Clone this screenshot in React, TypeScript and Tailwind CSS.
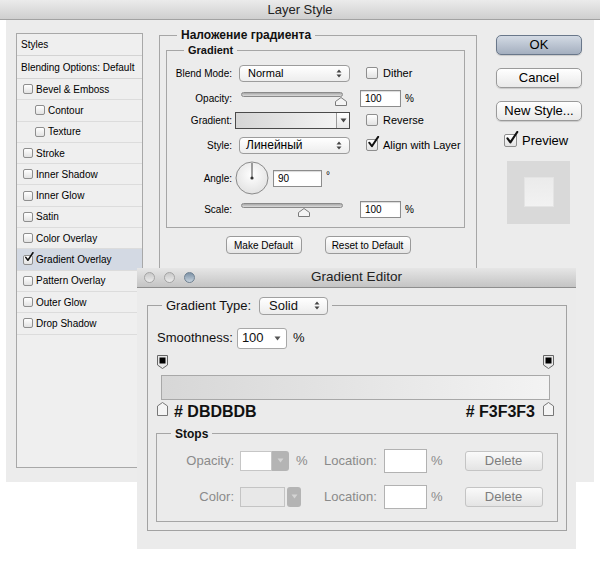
import React from 'react';

function Box({ checked = false, size = 'md' }: { checked?: boolean; size?: 'sm' | 'md' | 'lg' }) {
  const dim = size === 'sm' ? 'h-[10px] w-[10px]' : size === 'lg' ? 'h-[13px] w-[13px]' : 'h-[12px] w-[12px]';
  return (
    <span className={`relative inline-block shrink-0 rounded-[2px] border border-[#8e8e8e] bg-gradient-to-b from-white to-[#e2e2e2] ${dim}`}>
      {checked && (
        <svg viewBox="0 0 14 14" className="absolute -top-[4px] left-[0px] h-[125%] w-[125%]">
          <path d="M2.5 7.5 L5.5 11.5 L12.5 1" fill="none" stroke="#111" strokeWidth="2.2" strokeLinecap="round" strokeLinejoin="round" />
        </svg>
      )}
    </span>
  );
}

function UpDown() {
  return (
    <svg width="6" height="9" viewBox="0 0 6 9">
      <path d="M3 0.5 L5.5 3.5 H0.5Z M3 8.5 L5.5 5.5 H0.5Z" fill="#444" />
    </svg>
  );
}

function Down({ color = '#444' }: { color?: string }) {
  return (
    <svg width="7" height="5" viewBox="0 0 7 5">
      <path d="M0.5 0.5 H6.5 L3.5 4.5Z" fill={color} />
    </svg>
  );
}

function Thumb() {
  return (
    <svg width="12" height="9" viewBox="0 0 12 9">
      <path d="M0.5 8.5 V4.5 L6 0.5 L11.5 4.5 V8.5Z" fill="#f4f4f4" stroke="#7a7a7a" />
    </svg>
  );
}

function Slider({ pos }: { pos: number }) {
  return (
    <div className="relative h-[16px] w-[111px]">
      <div className="ml-[2px] mt-[3px] h-[5px] w-[102px] rounded-full border border-[#8a8a8a] bg-gradient-to-b from-[#a8a8a8] to-[#dcdcdc]" />
      <div className="absolute top-[5px]" style={{ left: pos }}>
        <Thumb />
      </div>
    </div>
  );
}

function Input({ value, w = 'w-[41px]' }: { value: string; w?: string }) {
  return (
    <div className={`flex h-[17px] items-center border border-[#8c8c8c] bg-white pl-[4px] text-[10px] shadow-[inset_0_1px_1px_rgba(0,0,0,0.15)] ${w}`}>
      {value}
    </div>
  );
}

const styleRows = [
  { label: 'Bevel & Emboss', indent: false },
  { label: 'Contour', indent: true },
  { label: 'Texture', indent: true },
  { label: 'Stroke', indent: false },
  { label: 'Inner Shadow', indent: false },
  { label: 'Inner Glow', indent: false },
  { label: 'Satin', indent: false },
  { label: 'Color Overlay', indent: false },
  { label: 'Gradient Overlay', indent: false, checked: true },
  { label: 'Pattern Overlay', indent: false },
  { label: 'Outer Glow', indent: false },
  { label: 'Drop Shadow', indent: false },
];

function MacButton({ label, primary = false }: { label: string; primary?: boolean }) {
  return (
    <div
      className={`flex h-[20px] w-[86px] items-center justify-center rounded-[5px] border text-[13px] text-black shadow-[0_1px_1px_rgba(0,0,0,0.15)] ${
        primary ? 'border-[#69778a] bg-gradient-to-b from-[#d3dae4] to-[#a4afbf]' : 'border-[#9a9a9a] bg-gradient-to-b from-white to-[#e9e9e9]'
      }`}
    >
      {label}
    </div>
  );
}

function LayerStyle() {
  return (
    <div className="absolute left-0 top-0 w-[600px]">
      <div className="flex h-[20px] items-center justify-center border-b border-[#a2a2a2] bg-gradient-to-b from-[#ebebeb] to-[#cfcfcf] text-[13px] text-[#222]">
        Layer Style
      </div>
      <div className="ml-[6px] flex h-[462px] w-[588px] items-start bg-[#ececec] pl-[10px] pt-[8px]">
        <div className="mt-[5px] h-[435px] w-[127px] border border-[#a8a8a8] bg-[#efefef] text-[10px] text-black">
          <div className="flex h-[22px] items-center border-b border-[#d3d3d3] pl-[4px]">Styles</div>
          <div className="flex h-[23px] items-center border-b border-[#d3d3d3] pl-[4px]">Blending Options: Default</div>
          {styleRows.map((r) => (
            <div
              key={r.label}
              className={`flex h-[21.3px] items-center gap-[3px] border-b border-[#dcdcdc] ${r.indent ? 'pl-[18px]' : 'pl-[6px]'} ${
                r.checked ? 'bg-[#d3d9e3]' : ''
              }`}
            >
              <Box size="sm" checked={r.checked} />
              <span>{r.label}</span>
            </div>
          ))}
        </div>

        <div className="ml-[16px] w-[318px]">
          <fieldset className="h-[290px] border border-[#a6a6a6] px-[6px] pt-[2px]">
            <legend className="ml-[11px] px-[4px] text-[12px] font-bold leading-[14px] text-[#111]">Наложение градиента</legend>
            <fieldset className="w-[299px] border border-[#a6a6a6] pb-[10px] text-[10px] text-black">
              <legend className="ml-[17px] px-[4px] text-[11px] font-bold leading-[13px] text-[#111]">Gradient</legend>
              <div className="mt-[8px] flex h-[16px] items-center">
                <span className="w-[65px] text-right">Blend Mode:</span>
                <div className="ml-[7px] flex h-[17px] w-[111px] items-center justify-between rounded-[4px] border border-[#9c9c9c] bg-gradient-to-b from-white to-[#ededed] pl-[8px] pr-[7px] text-[11px]">
                  Normal
                  <UpDown />
                </div>
                <span className="ml-[16px] flex items-center gap-[5px]">
                  <Box />
                  <span className="text-[11px]">Dither</span>
                </span>
              </div>
              <div className="mt-[9px] flex h-[16px] items-center">
                <span className="w-[65px] text-right">Opacity:</span>
                <div className="ml-[7px]">
                  <Slider pos={96} />
                </div>
                <div className="ml-[10px]">
                  <Input value="100" />
                </div>
                <span className="ml-[4px]">%</span>
              </div>
              <div className="mt-[6px] flex h-[16px] items-center">
                <span className="w-[65px] text-right">Gradient:</span>
                <div className="ml-[3px] flex h-[17px] w-[115px] border border-[#4a4a4a]">
                  <div className="h-full w-[100px] bg-gradient-to-r from-[#d6d6d6] to-[#f3f3f3]" />
                  <div className="flex flex-1 items-center justify-center border-l border-[#9a9a9a] bg-gradient-to-b from-white to-[#e6e6e6]">
                    <Down />
                  </div>
                </div>
                <span className="ml-[16px] flex items-center gap-[5px]">
                  <Box />
                  <span className="text-[11px]">Reverse</span>
                </span>
              </div>
              <div className="mt-[9px] flex h-[16px] items-center">
                <span className="w-[65px] text-right">Style:</span>
                <div className="ml-[7px] flex h-[17px] w-[111px] items-center justify-between rounded-[4px] border border-[#9c9c9c] bg-gradient-to-b from-white to-[#ededed] pl-[6px] pr-[7px] text-[12px]">
                  Линейный
                  <UpDown />
                </div>
                <span className="ml-[16px] flex items-center gap-[5px]">
                  <Box checked />
                  <span className="text-[11px]">Align with Layer</span>
                </span>
              </div>
              <div className="mt-[8px] flex h-[34px] items-center">
                <span className="w-[65px] text-right">Angle:</span>
                <svg width="34" height="34" viewBox="0 0 34 34" className="ml-[3px]">
                  <defs>
                    <radialGradient id="dial" cx="50%" cy="40%" r="60%">
                      <stop offset="0%" stopColor="#ffffff" />
                      <stop offset="100%" stopColor="#e2e2e2" />
                    </radialGradient>
                  </defs>
                  <circle cx="17" cy="17" r="16" fill="url(#dial)" stroke="#8a8a8a" />
                  <line x1="17" y1="17" x2="17" y2="2" stroke="#444" strokeWidth="1" />
                  <circle cx="17" cy="17" r="1.6" fill="#333" />
                </svg>
                <div className="ml-[4px]">
                  <Input value="90" w="w-[49px]" />
                </div>
                <span className="ml-[4px] -mt-[6px]">°</span>
              </div>
              <div className="mt-[6px] flex h-[16px] items-center">
                <span className="w-[65px] text-right">Scale:</span>
                <div className="ml-[7px]">
                  <Slider pos={59} />
                </div>
                <div className="ml-[10px]">
                  <Input value="100" />
                </div>
                <span className="ml-[4px]">%</span>
              </div>
            </fieldset>
            <div className="mt-[8px] flex justify-center gap-[23px] text-[10px] text-black">
              <div className="flex h-[18px] w-[76px] items-center justify-center rounded-[4px] border border-[#9a9a9a] bg-gradient-to-b from-white to-[#e6e6e6]">
                Make Default
              </div>
              <div className="flex h-[18px] w-[86px] items-center justify-center rounded-[4px] border border-[#9a9a9a] bg-gradient-to-b from-white to-[#e6e6e6]">
                Reset to Default
              </div>
            </div>
          </fieldset>
        </div>

        <div className="ml-[19px] flex w-[86px] flex-col pt-[7px]">
          <MacButton label="OK" primary />
          <div className="mt-[13px]">
            <MacButton label="Cancel" />
          </div>
          <div className="mt-[13px]">
            <MacButton label="New Style..." />
          </div>
          <div className="mt-[10px] flex items-center gap-[5px] pl-[8px] text-[13px]">
            <Box size="lg" checked />
            Preview
          </div>
          <div className="ml-[11px] mt-[10px] flex h-[63px] w-[63px] items-center justify-center bg-[#d9d9d9]">
            <div className="h-[30px] w-[30px] border border-[#e4e4e4] bg-gradient-to-b from-[#ebebeb] to-[#f2f2f2]" />
          </div>
        </div>
      </div>
    </div>
  );
}

function StopTop() {
  return (
    <svg width="11" height="14" viewBox="0 0 11 14">
      <path d="M0.5 0.5 H10.5 V10 L5.5 13.5 L0.5 10Z" fill="#e8e8e8" stroke="#666" />
      <rect x="2.5" y="2.5" width="6" height="6" fill="#000" />
    </svg>
  );
}

function StopBottom() {
  return (
    <svg width="11" height="14" viewBox="0 0 11 14">
      <path d="M0.5 13.5 H10.5 V4 L5.5 0.5 L0.5 4Z" fill="#f4f4f4" stroke="#777" />
    </svg>
  );
}

function Delete() {
  return (
    <div className="flex h-[20px] w-[78px] items-center justify-center rounded-[3px] border border-[#c4c4c4] bg-gradient-to-b from-[#fafafa] to-[#e4e4e4] text-[13px] text-[#7d7d7d]">
      Delete
    </div>
  );
}

function GradientEditor() {
  return (
    <div className="absolute left-[137px] top-[268px] w-[439px] text-[13px] text-[#111]">
      <div className="relative flex h-[20px] items-center justify-center border-b border-[#8e8e8e] bg-gradient-to-b from-[#e6e6e6] to-[#c4c4c4] text-[13.5px] text-[#222]">
        <div className="absolute left-[7px] top-[4px] flex gap-[9px]">
          <span className="h-[11px] w-[11px] rounded-full border border-[#a4a4a4] bg-gradient-to-b from-[#c8c8c8] to-[#ececec]" />
          <span className="h-[11px] w-[11px] rounded-full border border-[#a4a4a4] bg-gradient-to-b from-[#c8c8c8] to-[#ececec]" />
          <span className="h-[11px] w-[11px] rounded-full border border-[#6f8192] bg-gradient-to-b from-[#7d92a6] to-[#c7d3de]" />
        </div>
        Gradient Editor
      </div>
      <div className="h-[261px] bg-[#ebebeb] pl-[10px] pt-[8px]">
        <fieldset className="w-[420px] border border-[#a2a2a2] pb-[8px] pl-[9px]">
          <legend className="ml-[5px] px-[4px]">
            <div className="flex items-center gap-[8px]">
              <span>Gradient Type:</span>
              <div className="flex h-[18px] w-[69px] items-center justify-between rounded-[4px] border border-[#a0a0a0] bg-gradient-to-b from-white to-[#ececec] pl-[9px] pr-[7px]">
                Solid
                <UpDown />
              </div>
            </div>
          </legend>
          <div className="mt-[12px] flex h-[21px] items-center">
            <span>Smoothness:</span>
            <div className="ml-[4px] flex h-[21px] w-[50px] items-center justify-between rounded-[3px] border border-[#a8a8a8] bg-white pl-[4px] pr-[5px]">
              100
              <Down color="#555" />
            </div>
            <span className="ml-[6px]">%</span>
          </div>
          <div className="mt-[6px] w-[397px]">
            <div className="flex justify-between">
              <StopTop />
              <StopTop />
            </div>
            <div className="ml-[4px] mt-[6px] h-[25px] w-[389px] border border-[#a8a8a8] bg-gradient-to-r from-[#d7d7d7] to-[#f3f3f3]" />
            <div className="mt-[2px] flex items-start">
              <StopBottom />
              <span className="ml-[6px] mt-[1px] text-[16px] font-bold leading-[18px] text-[#111]">#&nbsp;DBDBDB</span>
              <span className="ml-auto mt-[1px] text-[16px] font-bold leading-[18px] text-[#111]">#&nbsp;F3F3F3</span>
              <span className="ml-[8px]">
                <StopBottom />
              </span>
            </div>
          </div>
          <fieldset className="-ml-px mt-[6px] w-[402px] border border-[#a6a6a6] pb-[12px] text-[#8a8a8a]">
            <legend className="ml-[14px] px-[4px] text-[12px] font-bold leading-[14px] text-[#111]">Stops</legend>
            <div className="mt-[8px] flex h-[24px] items-center">
              <span className="w-[77px] text-right">Opacity:</span>
              <div className="ml-[6px] flex w-[78px] items-center">
                <div className="h-[20px] w-[32px] border border-[#c6c6c6] bg-white" />
                <div className="flex h-[20px] w-[17px] items-center justify-center rounded-r-[3px] bg-[#b4b4b4]">
                  <Down color="#d4d4d4" />
                </div>
                <span className="ml-[7px]">%</span>
              </div>
              <span className="ml-[6px] w-[54px]">Location:</span>
              <div className="ml-[6px] h-[24px] w-[43px] border border-[#b2b2b2] bg-white" />
              <span className="ml-[4px]">%</span>
              <div className="ml-[22px]">
                <Delete />
              </div>
            </div>
            <div className="mt-[12px] flex h-[24px] items-center">
              <span className="w-[77px] text-right">Color:</span>
              <div className="ml-[6px] flex w-[78px] items-center">
                <div className="h-[20px] w-[45px] border border-[#c4c4c4] bg-[#e8e8e8]" />
                <div className="ml-[2px] flex h-[20px] w-[14px] items-center justify-center rounded-[3px] bg-[#b4b4b4]">
                  <Down color="#d4d4d4" />
                </div>
              </div>
              <span className="ml-[6px] w-[54px]">Location:</span>
              <div className="ml-[6px] h-[24px] w-[43px] border border-[#b2b2b2] bg-white" />
              <span className="ml-[4px]">%</span>
              <div className="ml-[22px]">
                <Delete />
              </div>
            </div>
          </fieldset>
        </fieldset>
      </div>
    </div>
  );
}

export default function App() {
  return (
    <div className="relative h-[569px] w-[600px] overflow-hidden bg-white font-['Liberation_Sans',Arial,sans-serif]">
      <LayerStyle />
      <GradientEditor />
    </div>
  );
}
